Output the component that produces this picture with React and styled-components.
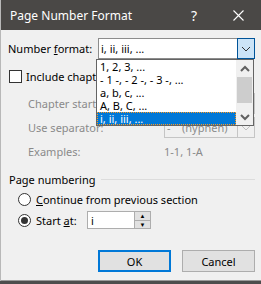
import React from "react";
import styled, { createGlobalStyle } from "styled-components";

const GlobalStyle = createGlobalStyle`
  html, body {
    margin: 0;
    padding: 0;
    background: #4d4d4d;
    overflow: hidden;
  }
  body {
    font-family: "Noto Sans", "Open Sans", sans-serif;
    font-size: 11px;
    color: #000;
  }
`;

const formats = [
  "1, 2, 3, ...",
  "- 1 -, - 2 -, - 3 -, ...",
  "a, b, c, ...",
  "A, B, C, ...",
  "i, ii, iii, ...",
];

function Chevron({ color = "#333", weight = 1 }) {
  return (
    <svg width="10" height="6" viewBox="0 0 10 6">
      <path d="M1 1 L5 5 L9 1" fill="none" stroke={color} strokeWidth={weight} />
    </svg>
  );
}

function ScrollArrow({ up }) {
  return (
    <svg width="10" height="7" viewBox="0 0 10 7">
      <path
        d={up ? "M1 6 L5 2 L9 6" : "M1 1 L5 5 L9 1"}
        fill="none"
        stroke="#606060"
        strokeWidth="2"
      />
    </svg>
  );
}

export default function App() {
  return (
    <>
      <GlobalStyle />
      <Window>
        <TitleBar>
          <Title>Page Number Format</Title>
          <TitleButton>?</TitleButton>
          <TitleButton $close>
            <svg width="11" height="11" viewBox="0 0 11 11">
              <path d="M0.5 0.5 L10.5 10.5 M10.5 0.5 L0.5 10.5" stroke="#fff" strokeWidth="1.1" />
            </svg>
          </TitleButton>
        </TitleBar>

        <Body>
          <FormatRow>
            <Label>
              Number <u>f</u>ormat:
            </Label>
            <Combo>
              <ComboText>i, ii, iii, ...</ComboText>
              <ComboButton $active>
                <Chevron />
              </ComboButton>
            </Combo>
          </FormatRow>

          {/* open drop-down list, lies over the fields below */}
          <DropList>
            <Items>
              {formats.map((f, i) => (
                <Item key={f} $selected={i === formats.length - 1}>
                  {f}
                </Item>
              ))}
            </Items>
            <ScrollBar>
              <ScrollBtn>
                <ScrollArrow up />
              </ScrollBtn>
              <Track>
                <Thumb />
              </Track>
              <ScrollBtn>
                <ScrollArrow />
              </ScrollBtn>
            </ScrollBar>
          </DropList>

          <CheckRow>
            <CheckBox />
            <Clip $w={70}>Include chapter number</Clip>
          </CheckRow>

          <Indented>
            <FieldRow>
              <Muted $w={69}>Chapter starts with style</Muted>
              <Combo $disabled>
                <ComboText $muted />
                <ComboButton>
                  <Chevron color="#bfbfbf" />
                </ComboButton>
              </Combo>
            </FieldRow>
            <FieldRow>
              <Muted>Use separator:</Muted>
              <Combo $disabled>
                <ComboText $muted>-&nbsp;&nbsp;&nbsp;&nbsp;(hyphen)</ComboText>
                <ComboButton>
                  <Chevron color="#bfbfbf" />
                </ComboButton>
              </Combo>
            </FieldRow>
            <FieldRow $short>
              <Muted>Examples:</Muted>
              <Muted>1-1, 1-A</Muted>
            </FieldRow>
          </Indented>

          <GroupHeader>
            <span>Page numbering</span>
            <Rule />
          </GroupHeader>

          <RadioRow>
            <Radio />
            <span>
              <u>C</u>ontinue from previous section
            </span>
          </RadioRow>
          <RadioRow>
            <Radio $checked />
            <RadioLabel>
              Start <u>a</u>t:
            </RadioLabel>
            <Spin>
              <SpinInput>i</SpinInput>
              <SpinButtons>
                <SpinBtn>▲</SpinBtn>
                <SpinBtn>▼</SpinBtn>
              </SpinButtons>
            </Spin>
          </RadioRow>

          <Buttons>
            <Button $default>OK</Button>
            <Button>Cancel</Button>
          </Buttons>
        </Body>
      </Window>
    </>
  );
}

const Window = styled.div`
  width: 260px;
  height: 280px;
  margin-left: 1px;
  background: #f0f0f0;
  border-bottom: 1px solid #9a9a9a;
  display: flex;
  flex-direction: column;
  box-shadow: -1px 0 0 #b8b8b8;
`;

const TitleBar = styled.div`
  height: 30px;
  flex: none;
  background: #4a4846;
  color: #fff;
  display: flex;
  align-items: center;
  padding-left: 9px;
`;

const Title = styled.div`
  flex: 1;
  font-size: 12px;
`;

const TitleButton = styled.div`
  width: ${(p) => (p.$close ? "46px" : "26px")};
  display: flex;
  justify-content: center;
  align-items: center;
  font-size: 14px;
  margin-right: ${(p) => (p.$close ? "0" : "8px")};
`;

const Body = styled.div`
  position: relative;
  flex: 1;
  padding: 8px 6px 0 7px;
  display: flex;
  flex-direction: column;
`;

const FormatRow = styled.div`
  height: 21px;
  display: flex;
  align-items: center;
`;

const Label = styled.span`
  width: 90px;
  flex: none;
`;

const Combo = styled.div`
  flex: 1;
  height: 21px;
  box-sizing: border-box;
  display: flex;
  align-items: stretch;
  background: ${(p) => (p.$disabled ? "#f0f0f0" : "#fff")};
  border: 1px solid ${(p) => (p.$disabled ? "#c5c5c5" : "#8c8c8c")};
  border-right: none;
`;

const ComboText = styled.div`
  flex: 1;
  display: flex;
  align-items: center;
  padding-left: 2px;
  color: ${(p) => (p.$muted ? "#8c8c8c" : "#000")};
  white-space: nowrap;
  overflow: hidden;
`;

const ComboButton = styled.div`
  width: 16px;
  flex: none;
  display: flex;
  align-items: center;
  justify-content: center;
  background: ${(p) => (p.$active ? "#cce4f7" : "#f0f0f0")};
  border: 1px solid ${(p) => (p.$active ? "#005499" : "#c5c5c5")};
  margin: -1px 0;
`;

const DropList = styled.div`
  position: absolute;
  left: 95px;
  top: 29px;
  width: 158px;
  height: 67px;
  box-sizing: border-box;
  background: #fff;
  border: 1px solid #646464;
  display: flex;
  z-index: 2;
`;

const Items = styled.div`
  flex: 1;
  display: flex;
  flex-direction: column;
`;

const Item = styled.div`
  height: 13px;
  line-height: 11px;
  box-sizing: border-box;
  white-space: nowrap;
  background: ${(p) => (p.$selected ? "#0078d7" : "transparent")};
  color: ${(p) => (p.$selected ? "#fff" : "#000")};
  border: 1px dotted ${(p) => (p.$selected ? "#ff9a1f" : "transparent")};
  padding-left: 2px;
`;

const ScrollBar = styled.div`
  width: 17px;
  flex: none;
  background: #f0f0f0;
  display: flex;
  flex-direction: column;
`;

const ScrollBtn = styled.div`
  height: 16px;
  display: flex;
  align-items: center;
  justify-content: center;
`;

const Track = styled.div`
  flex: 1;
  display: flex;
  align-items: flex-start;
  justify-content: center;
`;

const Thumb = styled.div`
  width: 15px;
  height: 26px;
  margin-top: 1px;
  background: #cdcdcd;
`;

const CheckRow = styled.div`
  margin-top: 11px;
  height: 13px;
  display: flex;
  align-items: center;
  gap: 4px;
  margin-left: 1px;
`;

const Clip = styled.span`
  white-space: nowrap;
  overflow: hidden;
  width: ${(p) => p.$w}px;
`;

const CheckBox = styled.div`
  width: 13px;
  height: 13px;
  box-sizing: border-box;
  border: 1px solid #333;
  background: #fff;
`;

const Indented = styled.div`
  margin-top: 10px;
  padding-left: 20px;
  display: flex;
  flex-direction: column;
  gap: 3px;
`;

const FieldRow = styled.div`
  height: ${(p) => (p.$short ? "20px" : "21px")};
  display: grid;
  grid-template-columns: 136px 1fr;
  align-items: center;
`;

const Muted = styled.span`
  color: #8a8a8a;
  white-space: nowrap;
  overflow: hidden;
  width: ${(p) => (p.$w ? `${p.$w}px` : "auto")};
`;

const GroupHeader = styled.div`
  margin-top: 10px;
  height: 16px;
  display: flex;
  align-items: center;
  gap: 6px;
  margin-left: 1px;
`;

const Rule = styled.div`
  flex: 1;
  height: 1px;
  background: #dcdcdc;
`;

const RadioRow = styled.div`
  margin-top: 3px;
  height: 18px;
  display: flex;
  align-items: center;
  padding-left: 10px;
`;

const Radio = styled.div`
  width: 13px;
  height: 13px;
  box-sizing: border-box;
  border-radius: 50%;
  border: 1px solid #333;
  background: #fff;
  margin-right: 5px;
  display: flex;
  align-items: center;
  justify-content: center;
  &::after {
    content: "";
    display: ${(p) => (p.$checked ? "block" : "none")};
    width: 7px;
    height: 7px;
    border-radius: 50%;
    background: #333;
  }
`;

const RadioLabel = styled.span`
  width: 51px;
`;

const Spin = styled.div`
  width: 64px;
  height: 18px;
  box-sizing: border-box;
  border: 1px solid #adadad;
  background: #fff;
  display: flex;
`;

const SpinInput = styled.div`
  flex: 1;
  padding-left: 3px;
  display: flex;
  align-items: center;
`;

const SpinButtons = styled.div`
  width: 15px;
  display: flex;
  flex-direction: column;
  border-left: 1px solid #adadad;
  background: #e1e1e1;
`;

const SpinBtn = styled.div`
  flex: 1;
  font-size: 6px;
  line-height: 8px;
  text-align: center;
  color: #000;
  & + & {
    border-top: 1px solid #adadad;
  }
`;

const Buttons = styled.div`
  margin-top: 21px;
  display: flex;
  justify-content: flex-end;
  gap: 11px;
`;

const Button = styled.div`
  width: 73px;
  height: 22px;
  box-sizing: border-box;
  background: #e1e1e1;
  border: ${(p) => (p.$default ? "2px solid #0078d7" : "1px solid #adadad")};
  display: flex;
  align-items: center;
  justify-content: center;
`;
